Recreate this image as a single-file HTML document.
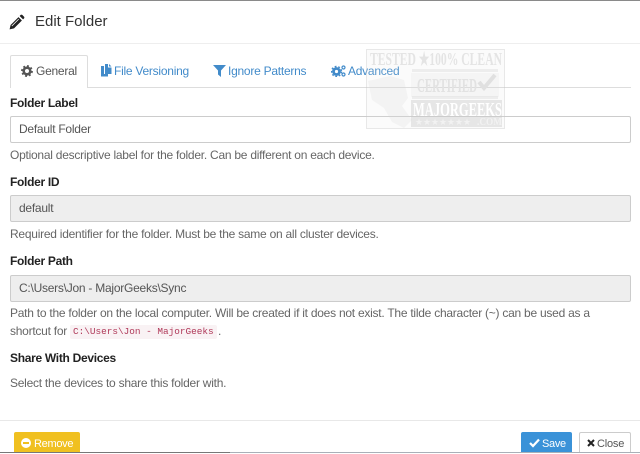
<!DOCTYPE html>
<html><head><meta charset="utf-8">
<style>
html,body{margin:0;padding:0;background:#fff}
#p{position:relative;width:640px;height:454px;overflow:hidden;background:#fff;font-family:"Liberation Sans",sans-serif;font-size:12px;color:#555;letter-spacing:-.25px}
#p div,#p svg{position:absolute}
.t{white-space:nowrap;line-height:16px}
.b{font-weight:bold;color:#222;letter-spacing:-.3px}
.h{color:#666}
.i{left:10px;width:619px;height:25px;border:1px solid #ccc;border-radius:2px;box-sizing:content-box;line-height:25px;text-indent:8px;color:#555}
.d{background:#eee}
.l{color:#428bca}
</style></head><body><div id="p">
<div style="left:0;top:0;width:640px;height:1px;background:#8a8a8a"></div>
<svg style="left:9px;top:14px" width="16" height="16" viewBox="0 0 14 14"><path d="M0.500 13.500l.9-3.900 6.900-6.900 3 3-6.900 6.900zM9.300 1.700l.9-.9q.7-.6 1.400 0l1.600 1.600q.6.700 0 1.400l-.9.9z" fill="#222"/><path d="M2.500 10.500l6-6" stroke="#fff" stroke-width=".7"/></svg>
<div class="t" style="left:35px;top:13px;font-size:15px;line-height:18px;color:#333;letter-spacing:0">Edit Folder</div>
<div style="left:0;top:43px;width:640px;height:1px;background:#eee"></div>

<div style="left:10px;top:87px;height:1px;background:#ddd;width:621px"></div>
<div style="left:10px;top:55px;width:78px;height:33px;box-sizing:border-box;border:1px solid #ddd;border-bottom:0;background:#fff;border-radius:2px 2px 0 0"></div>
<svg style="left:21px;top:65px" width="12" height="12" viewBox="0 0 12 12"><circle cx="6" cy="6" r="3.300" fill="none" stroke="#555" stroke-width="2.600"/><circle cx="6" cy="6" r="5" fill="none" stroke="#555" stroke-width="1.800" stroke-dasharray="1.900 2"/></svg>
<div class="t" style="left:36px;top:63px;color:#555">General</div>
<svg style="left:101px;top:64px" width="11" height="13" viewBox="0 0 11 13"><path d="M0 2h3v8h4v2.500H0z M4 0h3v3.500h3.500V10H4z M8 0l2.500 2.500H8z" fill="#428bca"/></svg>
<div class="t l" style="left:114px;top:63px">File Versioning</div>
<svg style="left:213px;top:65px" width="13" height="12" viewBox="0 0 13 12"><path d="M0 0h13L8 5.500V12L5 9.500v-4z" fill="#428bca"/></svg>
<div class="t l" style="left:228px;top:63px">Ignore Patterns</div>
<svg style="left:331px;top:65px" width="15" height="12" viewBox="0 0 15 12"><circle cx="5.500" cy="6.500" r="3" fill="none" stroke="#428bca" stroke-width="2.800"/><circle cx="5.500" cy="6.500" r="5" fill="none" stroke="#428bca" stroke-width="1.400" stroke-dasharray="1.800 1.800"/><circle cx="12.500" cy="2.500" r="1.500" fill="none" stroke="#428bca" stroke-width="1.200"/><circle cx="12.500" cy="9.500" r="1.500" fill="none" stroke="#428bca" stroke-width="1.200"/></svg>
<div class="t l" style="left:348px;top:63px">Advanced</div>

<div class="t b" style="left:10px;top:95px">Folder Label</div>
<div class="i" style="top:116px">Default Folder</div>
<div class="t h" style="left:10px;top:147px">Optional descriptive label for the folder. Can be different on each device.</div>
<div class="t b" style="left:10px;top:174px">Folder ID</div>
<div class="i d" style="top:195px">default</div>
<div class="t h" style="left:10px;top:226px">Required identifier for the folder. Must be the same on all cluster devices.</div>
<div class="t b" style="left:10px;top:253px">Folder Path</div>
<div class="i d" style="top:275px;height:25px">C:\Users\Jon - MajorGeeks\Sync</div>
<div class="t h" style="left:10px;top:305px">Path to the folder on the local computer. Will be created if it does not exist. The tilde character (~) can be used as a</div>
<div class="t h" style="left:10px;top:323px">shortcut for</div>
<div style="left:70px;top:325px;width:147px;height:14px;background:#f9f2f4;border-radius:2px"></div>
<div class="t" style="left:73px;top:324px;font-family:'Liberation Mono',monospace;font-size:9.400px;letter-spacing:0;line-height:15px;color:#b03a5a">C:\Users\Jon - MajorGeeks</div>
<div class="t h" style="left:218px;top:323px">.</div>
<div class="t b" style="left:10px;top:350px">Share With Devices</div>
<div class="t h" style="left:10px;top:375px">Select the devices to share this folder with.</div>

<svg style="left:366px;top:49px" width="139" height="80" viewBox="0 0 139 80">
<rect x=".5" y=".5" width="138" height="79" fill="rgba(225,225,225,.14)" stroke="rgba(200,200,200,.4)"/>
<path d="M2 32l22-5 14 4 4 18-6 8 10 14-8 8-12-6-8-14-12-8z" fill="rgba(215,215,215,.2)"/>
<path d="M46 20h86v3H46zM46 47h86v3H46z" fill="rgba(205,205,205,.3)"/>
<path d="M45 24h88v24H45z" fill="rgba(215,215,215,.15)"/>
<path d="M45 51h91v27H45z" fill="rgba(200,200,200,.4)"/>
<text x="4" y="16" font-family="Liberation Serif" font-weight="bold" font-size="18" letter-spacing="0" textLength="132" lengthAdjust="spacingAndGlyphs" fill="#e4e4e4">TESTED ★100% CLEAN</text>
<text x="51" y="43" font-family="Liberation Serif" font-weight="bold" font-size="20" letter-spacing="0" textLength="60" lengthAdjust="spacingAndGlyphs" fill="#e2e2e2">CERTIFIED</text>
<path d="M113 33l5 6 11-13" fill="none" stroke="#e0e0e0" stroke-width="4"/>
<text x="47" y="67" font-family="Liberation Serif" font-weight="bold" font-size="20" letter-spacing="0" textLength="89" lengthAdjust="spacingAndGlyphs" fill="#fff">MAJORGEEKS</text>
<text x="49" y="76" font-family="Liberation Sans" font-size="9" letter-spacing="0" textLength="56" lengthAdjust="spacingAndGlyphs" fill="#f2f2f2">★★★★★★★</text>
<text x="111" y="76" font-family="Liberation Serif" font-weight="bold" font-size="10" letter-spacing="0" textLength="25" lengthAdjust="spacingAndGlyphs" fill="#f2f2f2">.COM</text>
</svg>

<div style="left:0;top:420px;width:640px;height:1px;background:#e8e8e8"></div>
<div style="left:14px;top:432px;width:66px;height:21px;background:#f0c020;border-radius:2px 2px 0 0"></div>
<svg style="left:21px;top:438px" width="10" height="10" viewBox="0 0 10 10"><circle cx="5" cy="5" r="5" fill="#fff"/><rect x="2" y="4" width="6" height="2" fill="#f0c020"/></svg>
<div class="t" style="left:34px;top:436px;font-size:11px;color:#fff;letter-spacing:-.3px">Remove</div>
<div style="left:521px;top:432px;width:51px;height:21px;background:#3a92d8;border-radius:2px 2px 0 0"></div>
<svg style="left:529px;top:438px" width="11" height="10" viewBox="0 0 11 10"><path d="M1 5l3 3 6-6.500" fill="none" stroke="#fff" stroke-width="2.200"/></svg>
<div class="t" style="left:542px;top:436px;font-size:11px;color:#fff;letter-spacing:-.3px">Save</div>
<div style="left:579px;top:432px;width:52px;height:21px;box-sizing:border-box;border:1px solid #ccc;background:#fff;border-radius:2px 2px 0 0"></div>
<svg style="left:587px;top:439px" width="8" height="8" viewBox="0 0 8 8"><path d="M1 1l6 6M7 1L1 7" stroke="#222" stroke-width="2"/></svg>
<div class="t" style="left:597px;top:436px;font-size:11px;color:#555;letter-spacing:-.2px">Close</div>
<div style="left:0;top:452px;width:230px;height:1px;background:#777"></div>
<div style="left:230px;top:452px;width:410px;height:1px;background:#a9b0b8"></div>
</div></body></html>
